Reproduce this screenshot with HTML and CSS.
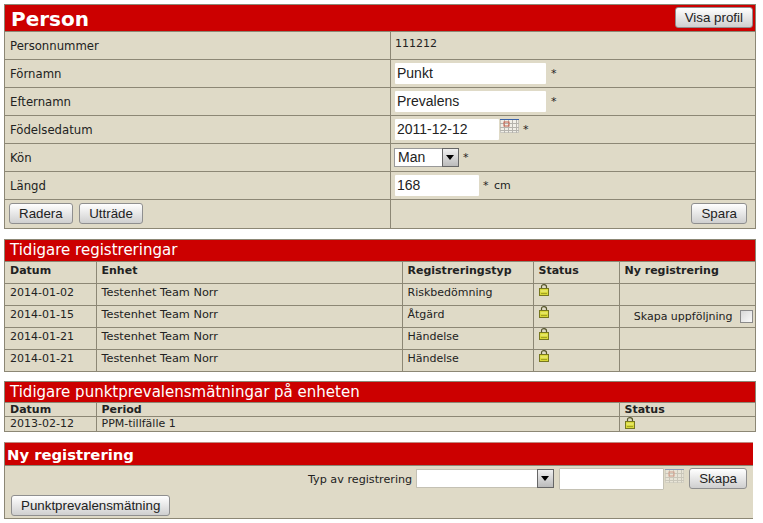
FILE: index.html
```html
<!DOCTYPE html>
<html lang="sv">
<head>
    <meta charset="UTF-8">
    <title>Person</title>
    <link rel="stylesheet" href="styles.css">
</head>
<body>
    <svg class="defs" width="0" height="0">
        <symbol id="lock" viewBox="0 0 10 12">
            <path d="M2.500 5V2.700C2.500 1.300 3.500 .6 5 .6s2.500 .7 2.500 2.100V5" fill="none" stroke="#55552a" stroke-width="1.200"/>
            <rect x="0.500" y="4.500" width="9" height="7" fill="#d8d838" stroke="#77771f"/>
            <path d="M1.500 7h7" stroke="#f2f28a"/>
            <path d="M2 9.500h6" stroke="#a3a321"/>
        </symbol>
        <symbol id="cal" viewBox="0 0 19 14">
            <rect x="0.500" y="0.500" width="18" height="13" fill="#f1efe8" stroke="#c9c7c0"/>
            <path d="M0 .5h19" stroke="#3a62a8"/>
            <path d="M4.500 1v13M8.500 1v13M12.500 1v13M16.500 1v13M0 4.500h19M0 8.500h19M0 11.500h19" stroke="#b5b3ad"/>
            <rect x="4" y="3" width="5" height="4" fill="none" stroke="#c9604c"/>
        </symbol>
    </svg>

    <section class="panel person">
        <div class="head head-person">
            <h1>Person</h1>
            <button class="btn btn-profile">Visa profil</button>
        </div>
        <table class="grid form-table">
            <tr class="first">
                <td class="label-col"><span class="lbl">Personnummer</span></td>
                <td class="pnr">111212</td>
            </tr>
            <tr>
                <td class="label-col"><span class="lbl">Förnamn</span></td>
                <td><input class="field w-name" type="text" value="Punkt"><span class="req">*</span></td>
            </tr>
            <tr>
                <td class="label-col"><span class="lbl">Efternamn</span></td>
                <td><input class="field w-name" type="text" value="Prevalens"><span class="req">*</span></td>
            </tr>
            <tr>
                <td class="label-col"><span class="lbl">Födelsedatum</span></td>
                <td>
                    <input class="field w-date" type="text" value="2011-12-12"><svg class="cal"><use href="#cal"/></svg><span class="req req-near">*</span>
                </td>
            </tr>
            <tr>
                <td class="label-col"><span class="lbl">Kön</span></td>
                <td>
                    <span class="select-box w-kon">
                        <select><option>Man</option></select>
                        <span class="arrow"></span>
                    </span><span class="req req-near">*</span>
                </td>
            </tr>
            <tr>
                <td class="label-col"><span class="lbl">Längd</span></td>
                <td><input class="field w-len" type="text" value="168"><span class="req req-cm">* cm</span></td>
            </tr>
            <tr class="actions">
                <td class="label-col">
                    <button class="btn">Radera</button>
                    <button class="btn">Utträde</button>
                </td>
                <td class="right"><button class="btn">Spara</button></td>
            </tr>
        </table>
    </section>

    <section class="panel reg">
        <h2 class="head">Tidigare registreringar</h2>
        <table class="grid list">
            <colgroup>
                <col class="c-date"><col class="c-unit"><col class="c-type"><col class="c-status"><col>
            </colgroup>
            <tr><th>Datum</th><th>Enhet</th><th>Registreringstyp</th><th>Status</th><th>Ny registrering</th></tr>
            <tr><td>2014-01-02</td><td class="unit">Testenhet Team Norr</td><td>Riskbedömning</td><td class="icon"><svg class="lock"><use href="#lock"/></svg></td><td></td></tr>
            <tr><td>2014-01-15</td><td class="unit">Testenhet Team Norr</td><td>Åtgärd</td><td class="icon"><svg class="lock"><use href="#lock"/></svg></td><td class="follow">Skapa uppföljning <input type="checkbox"></td></tr>
            <tr><td>2014-01-21</td><td class="unit">Testenhet Team Norr</td><td>Händelse</td><td class="icon"><svg class="lock"><use href="#lock"/></svg></td><td></td></tr>
            <tr><td>2014-01-21</td><td class="unit">Testenhet Team Norr</td><td>Händelse</td><td class="icon"><svg class="lock"><use href="#lock"/></svg></td><td></td></tr>
        </table>
    </section>

    <section class="panel ppm">
        <h2 class="head head-ppm">Tidigare punktprevalensmätningar på enheten</h2>
        <table class="grid list compact">
            <colgroup>
                <col class="c-date"><col class="c-period"><col>
            </colgroup>
            <tr><th>Datum</th><th>Period</th><th>Status</th></tr>
            <tr><td>2013-02-12</td><td>PPM-tillfälle 1</td><td><svg class="lock"><use href="#lock"/></svg></td></tr>
        </table>
    </section>

    <section class="panel new">
        <h2 class="head head-new">Ny registrering</h2>
        <div class="new-body">
            <div class="new-row">
                <span class="new-label">Typ av registrering</span>
                <span class="select-box w-typ">
                    <select><option></option></select>
                    <span class="arrow"></span>
                </span>
                <input class="field w-newdate" type="text"><svg class="cal cal-off"><use href="#cal"/></svg>
                <button class="btn">Skapa</button>
            </div>
            <button class="btn btn-ppm">Punktprevalensmätning</button>
        </div>
    </section>
</body>
</html>
```

FILE: styles.css
```css
body {
    font-family: "DejaVu Sans", Verdana, sans-serif;
    font-size: 11px;
    color: #222;
    margin: 0;
    padding: 4px 0 0 4px;
    background-color: white;
}
.defs {
    position: absolute;
}
.panel {
    width: 752px;
    background-color: #dfdac7;
    border: 1px solid #8c8775;
    box-sizing: border-box;
    margin-bottom: 10px;
}
.reg {
    margin-bottom: 9px;
}
.head {
    background-color: #cc0000;
    color: white;
    margin: 0;
    font-size: 15px;
    font-weight: normal;
    height: 21px;
    line-height: 20px;
    padding-left: 5px;
    border-bottom: 1px solid #8c8775;
}
.head-person {
    display: flex;
    justify-content: space-between;
    height: 26px;
    padding: 0 2px 0 6px;
}
.head-person h1 {
    margin: 0;
    font-size: 20px;
    line-height: 28px;
}
.btn-profile {
    margin-top: 2px;
    height: 20px;
}
.head-ppm {
    height: 20px;
}
.head-new {
    height: 22px;
    line-height: 23px;
    padding-left: 2px;
    font-size: 14.8px;
    font-weight: bold;
}

.grid {
    width: 100%;
    border-collapse: collapse;
    table-layout: fixed;
}
.grid td, .grid th {
    border: 1px solid #8c8775;
    padding: 0 5px;
    text-align: left;
}
.grid tr:first-child td, .grid tr:first-child th {
    border-top: none;
}
.grid tr:last-child td {
    border-bottom: none;
}
.grid td:first-child, .grid th:first-child {
    border-left: none;
}
.grid td:last-child, .grid th:last-child {
    border-right: none;
}

.form-table tr {
    height: 28px;
}
.form-table .first {
    height: 27px;
}
.form-table .actions {
    height: 29px;
}
.label-col {
    width: 375px;
}
.lbl {
    font-size: 11.7px;
    position: relative;
    top: 1px;
}
.pnr {
    vertical-align: top;
    padding-top: 5px !important;
}
.right {
    text-align: right !important;
    padding-right: 8px !important;
}
.form-table td:last-child {
    padding-left: 4px;
}

.field {
    font-family: "Liberation Sans", Arial, sans-serif;
    font-size: 14px;
    color: #222;
    border: none;
    background: white;
    height: 21px;
    padding: 0 2px;
    margin: 0;
    box-sizing: border-box;
    vertical-align: middle;
    border-radius: 1px;
}
.w-name { width: 151px; }
.w-date { width: 104px; }
.w-len { width: 84px; }
.w-newdate {
    width: 105px;
    height: 22px;
    border: 1px solid #c4c1b4;
}
.req {
    margin-left: 5px;
    vertical-align: middle;
}
.req-near {
    margin-left: 4px;
}
.req-cm {
    margin-left: 4px;
    word-spacing: 2px;
}
.cal {
    width: 19px;
    height: 14px;
    margin-left: 1px;
    vertical-align: top;
}
.cal-off {
    opacity: 0.5;
}

.select-box {
    display: inline-flex;
    box-sizing: border-box;
    height: 19px;
    background: white;
    border: 1px solid #999;
    vertical-align: middle;
}
.select-box select {
    appearance: none;
    flex: 1;
    min-width: 0;
    border: none;
    background: white;
    font-family: "Liberation Sans", Arial, sans-serif;
    font-size: 14px;
    color: #222;
    padding: 0 3px;
}
.arrow {
    width: 15px;
    border: 1px solid #666;
    background: linear-gradient(#f0f0f0, #bbb);
    position: relative;
    margin: -1px -1px -1px 0;
}
.arrow::after {
    content: "";
    position: absolute;
    left: 3px;
    top: 6px;
    border: 4px solid transparent;
    border-top: 5px solid black;
    border-bottom: none;
}
.w-kon { width: 65px; margin-left: -1px; }
.w-typ { width: 138px; border-color: #c4c1b4; margin-top: 1px; }

.btn {
    font-family: "Liberation Sans", Arial, sans-serif;
    font-size: 13.33px;
    color: #222;
    height: 21px;
    padding: 0 9px;
    border: 1px solid #8f8f8f;
    border-radius: 3px;
    background: linear-gradient(#ffffff, #cfcfcf);
    cursor: pointer;
}
.form-table .label-col .btn {
    margin-right: 3px;
}
.form-table .label-col .btn:first-child {
    margin-left: -1px;
}

.c-date { width: 91px; }
.c-unit { width: 306px; }
.c-type { width: 131px; }
.c-status { width: 86px; }
.c-period { width: 523px; }

.list th {
    box-sizing: border-box;
    height: 21px;
    padding-top: 1px;
    font-weight: bold;
    vertical-align: top;
    line-height: 16px;
}
.list td {
    box-sizing: border-box;
    height: 22px;
    padding-top: 2px;
    line-height: 14px;
    vertical-align: top;
    color: #222;
}
.list .unit {
    font-size: 11.3px;
}
.list .icon {
    padding-top: 0;
}
.lock {
    width: 10px;
    height: 12px;
    display: block;
}
.list .follow {
    text-align: right;
    padding: 4px 2px 0 0;
    white-space: nowrap;
}
.follow input {
    appearance: none;
    width: 13px;
    height: 13px;
    margin: 0 0 0 4px;
    vertical-align: middle;
    border: 1px solid #8a8a8a;
    background: linear-gradient(135deg, #d8d8d8, #fafafa);
}
.compact th {
    height: 13px;
    padding-top: 1px;
    line-height: 12px;
}
.compact td {
    height: 14px;
    padding-top: 0;
    line-height: 14px;
}

.new {
    width: 749px;
    height: 77px;
    border-top-color: #c08a80;
    border-right: none;
    margin-bottom: 0;
}
.new-body {
    padding: 2px 6px 0 6px;
}
.new-row {
    display: flex;
    justify-content: flex-end;
    align-items: flex-start;
}
.new-label {
    margin: 5px 4px 0 0;
    font-size: 11.2px;
}
.new-row .w-newdate {
    margin-left: 5px;
}
.new-row .cal-off {
    margin: 1px 5px 0 1px;
}
.btn-ppm {
    display: block;
    margin-top: 5px;
}
```
